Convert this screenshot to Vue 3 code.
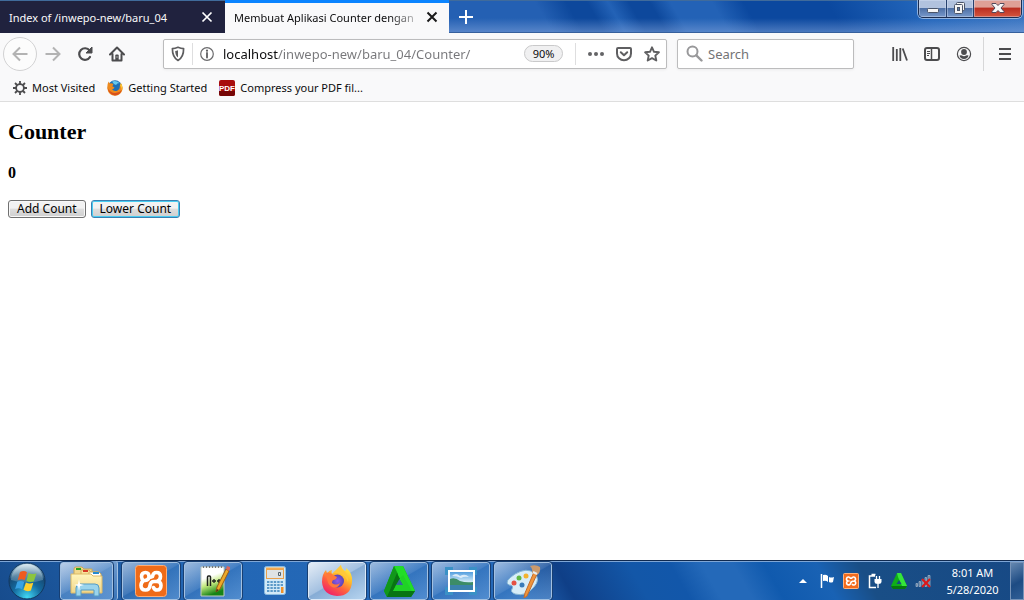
<script setup>
import { ref } from 'vue'

const count = ref(0)
const address = ref('localhost/inwepo-new/baru_04/Counter/')
const query = ref('')
</script>

<template>
  <div class="screen">
    <header class="titlebar">
      <div class="tabs" role="tablist">
        <div class="tab">
          <button class="tab-label" role="tab">Index of /inwepo-new/baru_04</button>
          <button class="tab-close" aria-label="Close tab">
            <svg width="12" height="12" viewBox="0 0 12 12"><path d="M1.500 1.500l9 9M10.500 1.500l-9 9" stroke="#fff" stroke-width="1.700" /></svg>
          </button>
        </div>
        <div class="tab active">
          <button class="tab-label" role="tab" aria-selected="true">Membuat Aplikasi Counter dengan</button>
          <button class="tab-close" aria-label="Close tab">
            <svg width="12" height="12" viewBox="0 0 12 12"><path d="M1.500 1.500l9 9M10.500 1.500l-9 9" stroke="#1a1a1a" stroke-width="2" /></svg>
          </button>
        </div>
        <button class="new-tab" aria-label="New tab">
          <svg width="14" height="14" viewBox="0 0 14 14"><path d="M7 0v14M0 7h14" stroke="#fff" stroke-width="2" /></svg>
        </button>
      </div>
      <div class="window-controls">
        <button class="wc" aria-label="Minimize">
          <svg width="26" height="18" viewBox="0 0 26 18"><rect x="7.500" y="8.500" width="11" height="4" rx="1" fill="#f5f5f5" stroke="#4a5468" /></svg>
        </button>
        <button class="wc" aria-label="Restore">
          <svg width="26" height="18" viewBox="0 0 26 18">
            <g fill="#f5f5f5" stroke="#4a5468"><rect x="9.500" y="2.500" width="8" height="8" rx="1" /><rect x="7.500" y="4.500" width="8" height="9" rx="1" /><rect x="10.500" y="7.500" width="2" height="3" fill="#5a79a8" /></g>
          </svg>
        </button>
        <button class="wc close" aria-label="Close window">
          <svg width="48" height="18" viewBox="0 0 48 18">
            <path d="M18 3.500h4l2 2 2-2h4v1L27 8l3 3.500v1h-4l-2-2-2 2h-4v-1L21 8l-3-3.500z" fill="#f8f8f8" stroke="#53495b" />
          </svg>
        </button>
      </div>
    </header>

    <nav class="toolbar" aria-label="Navigation">
      <button class="tool back" aria-label="Back">
        <svg width="16" height="16" viewBox="0 0 16 16"><path d="M15.500 8H1.500M8 1.500L1.500 8 8 14.500" fill="none" stroke="#b3b3b3" stroke-width="2" /></svg>
      </button>
      <button class="tool" aria-label="Forward">
        <svg width="16" height="16" viewBox="0 0 16 16"><path d="M0.500 8h14M8 1.500L14.500 8 8 14.500" fill="none" stroke="#b3b3b3" stroke-width="2" /></svg>
      </button>
      <button class="tool" aria-label="Reload">
        <svg width="16" height="16" viewBox="0 0 16 16"><path d="M12.600 4.500A5.800 5.800 0 1 0 13 11" fill="none" stroke="#4c4c4e" stroke-width="2.200" stroke-linecap="round" /><path d="M15 1v6H9z" fill="#4c4c4e" stroke="#4c4c4e" stroke-linejoin="round" /></svg>
      </button>
      <button class="tool" aria-label="Home">
        <svg width="16" height="16" viewBox="0 0 16 16"><path d="M1 8.500L8 1.500l7 7M3.500 8v6.500h9V8" fill="none" stroke="#4c4c4e" stroke-width="2" stroke-linecap="round" stroke-linejoin="round" /><path d="M6.300 14V9.500q0-1 1-1h1.400q1 0 1 1V14z" fill="#4c4c4e" /><path d="M8 10.500v1" stroke="#f9f9fa" /></svg>
      </button>

      <div class="field address">
        <button class="field-btn shield" aria-label="Tracking protection">
          <svg width="14" height="16" viewBox="0 0 14 16"><path d="M7 1.300Q10 2.600 12.600 2.600C12.700 8.500 11.700 11.900 7 14.500 2.300 11.900 1.300 8.500 1.400 2.600Q4 2.600 7 1.300z" fill="none" stroke="#5d5d5f" stroke-width="1.700" stroke-linejoin="round" /><path d="M7 4.200v7.300C4.900 10 4.300 8 4.200 5Q5.700 4.900 7 4.200z" fill="#5d5d5f" /></svg>
        </button>
        <button class="field-btn info" aria-label="Site information">
          <svg width="14" height="14" viewBox="0 0 14 14"><circle cx="7" cy="7" r="6.300" fill="none" stroke="#6b6b6d" stroke-width="1.200" /><path d="M7 6v4.500" stroke="#5d5d5f" stroke-width="1.800" stroke-linecap="round" /><circle cx="7" cy="3.700" r="1.100" fill="#5d5d5f" /></svg>
        </button>
        <input v-model="address" class="url" type="text" aria-label="Address" spellcheck="false" />
        <button class="zoom">90%</button>
        <span class="field-line"></span>
        <button class="field-btn" aria-label="Page actions">
          <svg width="16" height="16" viewBox="0 0 16 16" fill="#646466"><circle cx="2" cy="8" r="2" /><circle cx="8" cy="8" r="2" /><circle cx="14" cy="8" r="2" /></svg>
        </button>
        <button class="field-btn" aria-label="Save to Pocket">
          <svg width="16" height="16" viewBox="0 0 16 16" fill="none" stroke="#5f5f61" stroke-width="2" stroke-linecap="round" stroke-linejoin="round"><path d="M2 2h12q1 0 1 1v4.500a7 6.800 0 0 1-14 0V3q0-1 1-1z" /><path d="M4.800 6.200L8 9.200l3.200-3" /></svg>
        </button>
        <button class="field-btn" aria-label="Bookmark this page">
          <svg width="16" height="16" viewBox="0 0 16 16"><path d="M8 1.300l2 4.500 4.900.5-3.600 3.300 1 4.900L8 12.100l-4.300 2.400 1-4.900L1.100 6.300 6 5.800z" fill="none" stroke="#5f5f61" stroke-width="1.900" stroke-linejoin="round" /></svg>
        </button>
      </div>

      <div class="field search">
        <svg width="17" height="17" viewBox="0 0 17 17" fill="none" stroke="#98989a"><circle cx="6.500" cy="6.500" r="5" stroke-width="2" /><path d="M10.300 10.300l5.200 5.200" stroke-width="2.400" stroke-linecap="round" /></svg>
        <input v-model="query" type="search" placeholder="Search" aria-label="Search" />
      </div>

      <button class="tool" aria-label="Library">
        <svg width="16" height="16" viewBox="0 0 16 16" fill="none" stroke="#4c4c4e" stroke-width="1.800"><path d="M1.200 1v14M4.800 3v12M8.300 2v13M10.700 2.500L15 14.500" /></svg>
      </button>
      <button class="tool" aria-label="Sidebar">
        <svg width="16" height="16" viewBox="0 0 16 16" fill="none" stroke="#4c4c4e"><rect x="1" y="2" width="14" height="12" rx="2" stroke-width="2" /><path d="M7.500 2v12" stroke-width="1.500" /><path d="M3 5.500h3M3 7.500h3M3 9.500h2" /></svg>
      </button>
      <button class="tool" aria-label="Account">
        <svg width="16" height="16" viewBox="0 0 16 16"><circle cx="8" cy="8" r="6.600" fill="none" stroke="#4c4c4e" stroke-width="1.200" /><circle cx="8" cy="6" r="2.900" fill="#4c4c4e" /><path d="M3.500 9.500q1.800-.7 2.500 0 2 1.400 4 0 .8-.7 2.500 0-.7 3.300-4.500 3.600-3.800-.3-4.500-3.600z" fill="#4c4c4e" /></svg>
      </button>
      <span class="toolbar-line"></span>
      <button class="tool" aria-label="Open menu">
        <svg width="12" height="12" viewBox="0 0 12 12"><path d="M0 1h12M0 6h12M0 11h12" stroke="#4c4c4e" stroke-width="2" /></svg>
      </button>
    </nav>

    <nav class="bookmarks" aria-label="Bookmarks">
      <a href="#">
        <svg width="14" height="14" viewBox="0 0 14 14" fill="none" stroke="#4c4c4e"><circle cx="7" cy="7" r="3.900" stroke-width="1.800" /><path d="M7 0v3M7 11v3M0 7h3M11 7h3M2 2l2 2M10 10l2 2M12 2l-2 2M4 10l-2 2" stroke-width="1.800" /></svg>
        Most Visited
      </a>
      <a href="#">
        <svg width="16" height="16" viewBox="0 0 16 16"><circle cx="8" cy="7.500" r="7.200" fill="#1f6fb4" /><path d="M5 1.500q4-1.500 7.500 1.500Q10 3 9 5 7 5 5 1.500z" fill="#68c8ed" /><path d="M1.500 1.500q.3 1.600 1.500 2 2-.6 3.500.8L5.300 6.200 7.500 7.500q-1 2-2.500 1.500 2 3 5.500 1.500 2.800-1.500 2.200-4.500Q13.500 5 13.800 3 16.200 6 15.500 9.500 14 15.500 8 15.700 1.500 15.300.4 9 0 4.500 1.500 1.500z" fill="#ee8a1d" /><path d="M.6 8q2.700 5 7.500 5 4.500-.2 6.700-3Q13 15.400 8 15.400 2 14.800.6 8z" fill="#d8501c" /><path d="M13.800 3Q16.200 6.500 14.800 10.500q0-3-1.600-5z" fill="#ffce32" /></svg>
        Getting Started
      </a>
      <a href="#">
        <svg class="pdf" width="16" height="16" viewBox="0 0 16 16"><rect width="16" height="16" rx="2" fill="#a80d0d" /><path d="M0 11h16v3a2 2 0 0 1-2 2H2a2 2 0 0 1-2-2z" fill="#760606" /><text x="8" y="11" text-anchor="middle">PDF</text></svg>
        Compress your PDF fil...
      </a>
    </nav>

    <main class="page">
      <h2>Counter</h2>
      <h4>{{ count }}</h4>
      <div class="actions">
        <button class="count-btn" @click="count++">Add Count</button>
        <button class="count-btn focused" @click="count--">Lower Count</button>
      </div>
    </main>

    <footer class="taskbar">
      <button class="start" aria-label="Start">
        <svg width="38" height="38" viewBox="0 0 38 38">
          <defs>
            <radialGradient id="orb" cx=".5" cy=".95" r=".9"><stop offset="0" stop-color="#41d8f4" /><stop offset=".45" stop-color="#146a9f" /><stop offset=".75" stop-color="#164a75" /><stop offset="1" stop-color="#8fb4c9" /></radialGradient>
            <linearGradient id="shine" x2="0" y2="1"><stop stop-color="#e3eff5" stop-opacity=".9" /><stop offset="1" stop-color="#7ba6bd" stop-opacity=".35" /></linearGradient>
          </defs>
          <circle cx="19" cy="19" r="18" fill="url(#orb)" stroke="#12375e" />
          <path d="M3 18A16 16 0 0 1 35 18Q19 23 3 18z" fill="url(#shine)" />
          <path d="M12 10q4-2 7 .2l-2.300 8q-3.200-2-7 0z" fill="#ef5b20" />
          <path d="M20.500 11q3.500 2 8 .2l-2.600 8q-4 1.600-7.500-.3z" fill="#8bc53f" />
          <path d="M9.300 19.700q3.700-1.700 6.900.3l-2.100 7.300q-3.500-2-7-.2z" fill="#38a2e4" />
          <path d="M17.900 20.400q3.500 2 7.400.3l-2.400 7.900q-4 1.400-7.400-.8z" fill="#ffd02c" />
        </svg>
      </button>

      <div class="tasks">
        <div class="stack">
          <button class="task" aria-label="File Explorer">
            <svg width="36" height="34" viewBox="0 0 36 34">
              <defs><linearGradient id="folder" x2="0" y2="1"><stop stop-color="#fff5bd" /><stop offset="1" stop-color="#f0d588" /></linearGradient></defs>
              <path d="M5 5q0-2 2-2h6l2 2h8v21H5z" fill="#f2d98e" stroke="#c9a757" /><path d="M7 4h5v2H7z" fill="#28a51b" />
              <path d="M12 6h8l2 2h7v19H12z" fill="#f9e29b" stroke="#cfae5c" /><path d="M14 6h5v2h-5z" fill="#d63a25" />
              <path d="M20 8h10l2 2v17H20z" fill="#fff" stroke="#cfae5c" /><path d="M24 8h6v2h-6z" fill="#238ad0" />
              <path d="M2 10h20l2 2h9v17H2z" fill="url(#folder)" stroke="#dcb966" />
              <path d="M7 32V24q0-4 4-4h15q4 0 4 4v8h-5v-6H12v6z" fill="#9ad4ec" stroke="#559bc3" />
              <path d="M10 15l1 5 4 1-4 1-1 5-1-5-4-1 4-1z" fill="#fff" />
            </svg>
          </button>
        </div>
        <button class="task" aria-label="XAMPP Control Panel">
          <svg width="34" height="34" viewBox="0 0 34 34">
            <rect x="1.500" y="1.500" width="31" height="31" rx="3" fill="#ef6b18" stroke="#ffad75" />
            <path d="M15 12.500Q15 8.500 11.500 8.500 7.500 8.500 7.500 12.500 7.500 15 9.500 16.500 7 18.500 7 21.500 7 26 11.500 26 15.500 26 16 21.500 16.500 17.500 20 17.500H23Q27 17.500 27 21.500 27 26 23 26 20.500 26 19.500 23.500M18.500 12.500Q19 8.500 22.500 8.500 26.500 8.500 26.500 12.500 26.500 16 23 17.500M11 16.500Q15 16 15 12.500 16 14 18.500 12.500" fill="none" stroke="#fff" stroke-width="3.600" stroke-linecap="round" stroke-linejoin="round" />
          </svg>
        </button>
        <button class="task" aria-label="Notepad++">
          <svg width="34" height="34" viewBox="0 0 34 34">
            <defs><linearGradient id="note" x1="0" x2=".3" y2="1"><stop offset=".4" stop-color="#fff" /><stop offset=".65" stop-color="#c4ea7e" /><stop offset="1" stop-color="#168315" /></linearGradient></defs>
            <path d="M5 3h23v29H5z" fill="url(#note)" stroke="#c4ccc0" /><path d="M7 3h20" stroke="#777" stroke-width="2" stroke-dasharray="1 2" />
            <path d="M11.500 22V13q0-1 1-1h1q1 0 1 1v9" fill="none" stroke="#20231e" stroke-width="1.500" /><path d="M16 17h4M18 15v4M21 17h4M23 15v4" stroke="#20231e" stroke-width="1.300" />
            <path d="M30 5l3 2-9 18-4 3 1-5z" fill="#ecaa29" stroke="#9b5915" /><path d="M30 5l1-3 3 1v2l-1 2z" fill="#d96760" /><path d="M20 28l1-3 1.500 1z" fill="#332a1b" />
          </svg>
        </button>
        <button class="task plain" aria-label="Calculator">
          <svg width="24" height="32" viewBox="0 0 24 32">
            <rect x="1.500" y="1.500" width="21" height="28" rx="2" fill="#d2e9f7" stroke="#8abbe0" /><rect x="3.500" y="4.500" width="17" height="9" fill="#dfe3e4" stroke="#e8a04c" /><path d="M3 3.500h18" stroke="#f3aa51" stroke-width="2" /><path d="M15.500 7.500h2v3h-2z" fill="none" stroke="#56636b" />
            <path d="M4 17h16M4 20h16M4 23h13M4 26h13" stroke="#5c9ac8" stroke-width="2" stroke-dasharray="2.400 1" /><path d="M18 22h2.500v6H18z" fill="#f09128" />
          </svg>
        </button>
        <button class="task current" aria-label="Firefox">
          <svg width="34" height="34" viewBox="0 0 34 34">
            <defs>
              <linearGradient id="flame" x1=".8" x2=".2" y2="1"><stop stop-color="#fff34f" /><stop offset=".35" stop-color="#ffb829" /><stop offset=".62" stop-color="#ff633d" /><stop offset="1" stop-color="#ed1770" /></linearGradient>
              <radialGradient id="globe"><stop stop-color="#9059ec" /><stop offset="1" stop-color="#5945b4" /></radialGradient>
            </defs>
            <path d="M21 1q0 3 4 6 2-1 1-3 7 5 6 14-1 14-15 14Q3 31 2 18 2 10 6 6l1 3q3-3 5-3-1 2 0 4 5-4 9-9z" fill="url(#flame)" />
            <circle cx="17.500" cy="17" r="6.500" fill="url(#globe)" /><path d="M6 9q4-1 7 2l4 2q-1 3-4 3-1 1-1 3 4 3 8 0-2 6-8 4Q7 21 6 9z" fill="#ff783b" /><path d="M12 10q4-4 9-9 0 4 5 8 3 4 2 9-2-6-7-8-4-2-9 0z" fill="#ffc83a" />
          </svg>
        </button>
        <button class="task" aria-label="Green triangle application">
          <svg width="34" height="34" viewBox="0 0 34 34"><path d="M12 2h9l12 25-4 6H5L2 27z" fill="#0baf14" /><path d="M12 2h9l12 25H24L14 8z" fill="#22dd28" /><path d="M12 2l4 8-9 17 2 6H5l-3-6z" fill="#11971a" /><path d="M15 9l3 6-7 12h22l-4 6H5z" fill="#087412" /><path d="M11 27l3-6h8l-4-7 3-3 9 16z" fill="#20d226" /><path d="M17.500 15l3.500 6h-7z" fill="#3767a0" /></svg>
        </button>
        <button class="task" aria-label="Photo viewer">
          <svg width="32" height="28" viewBox="0 0 32 28">
            <defs><linearGradient id="sky" x2="0" y2="1"><stop stop-color="#4696dc" /><stop offset=".6" stop-color="#e1f4fb" /></linearGradient></defs>
            <path d="M2 8V2h6M24 2h6v6M30 20v6h-6M8 26H2v-6" fill="none" stroke="#3a91c6" stroke-width="4" /><rect x="4" y="4" width="25" height="20" fill="url(#sky)" stroke="#fff" stroke-width="2" /><path d="M5 12q5-2 10 2 6 2 13 1v4H5z" fill="#3c8c67" /><path d="M5 18h23v5H5z" fill="#3b81ad" /><path d="M7 9q4-4 8 0 5-3 9 1-5-1-8 1-4-2-9-2z" fill="#fff" opacity=".7" />
          </svg>
        </button>
        <button class="task" aria-label="Paint">
          <svg width="36" height="34" viewBox="0 0 36 34">
            <path d="M10 10Q22 3 29 9q7 6 0 14-8 10-19 7-5-2-3-5 2-4-3-4-6-3 6-11z" fill="#d7edf8" stroke="#84b4d3" /><circle cx="17" cy="21" r="2.500" fill="#397bb8" /><circle cx="9" cy="19" r="2.500" fill="#e45142" /><circle cx="14" cy="14" r="2.500" fill="#61b745" /><circle cx="21" cy="12" r="2.500" fill="#f3b32d" /><path d="M29 8l3 2-10 22-3 2 1-5z" fill="#ef943b" stroke="#c36d2d" /><path d="M25 2q6-2 10 1 1 5-3 8l-5-2q1-4-2-7z" fill="#cb9a6c" /><path d="M28 8l4 2" stroke="#e8edf0" stroke-width="2" />
          </svg>
        </button>
      </div>

      <div class="tray">
        <button aria-label="Show hidden icons"><svg width="8" height="4" viewBox="0 0 8 4"><path d="M0 4l4-4 4 4z" fill="#fff" /></svg></button>
        <button aria-label="Action Center"><svg width="16" height="16" viewBox="0 0 16 16"><path d="M2.500 1v14" stroke="#fff" stroke-width="1.500" /><path d="M4 2q3-1 5 1v6q-2-2-5-1zM10 4q2 1 5 0l-1 5q-2 1-4 0z" fill="#fff" /></svg></button>
        <button aria-label="XAMPP"><svg width="16" height="16" viewBox="0 0 16 16"><rect x=".5" y=".5" width="15" height="15" rx="1" fill="#f26b1d" stroke="#ffb27d" /><path d="M7.500 6A2 2 0 1 0 5 8a2 2 0 1 0 2.500 2.500Q8 8 11 8A2 2 0 1 0 8.500 6M11 8a2 2 0 1 1-2 3" fill="none" stroke="#fff" stroke-width="1.600" /></svg></button>
        <button aria-label="Power"><svg width="16" height="16" viewBox="0 0 16 16" fill="none" stroke="#fff"><path d="M8 3H2.500v11.500H9M4.500 1.500h4" stroke-width="1.500" /><path d="M9.500 3v4M12.500 3v4M11 11v4" stroke-width="1.300" /><path d="M7.500 6h7v2.500q0 2.500-3.500 2.500-3.500 0-3.500-2.500z" fill="#fff" stroke="none" /></svg></button>
        <button aria-label="Green triangle application"><svg width="16" height="16" viewBox="0 0 16 16"><path d="M6 0h4l6 13-2 3H2l-2-3z" fill="#0fae19" /><path d="M6 0h4l6 13h-5L7 4z" fill="#35e53b" /><path d="M0 13h16l-2 3H2z" fill="#06780f" /><path d="M8 7l2.500 4h-5z" fill="#164b84" /></svg></button>
        <button aria-label="Network unavailable"><svg width="16" height="14" viewBox="0 0 16 14"><path d="M1 9.500h1.500v3H1zM4 7.500h1.500v5H4zM7 5.500h1.500v7H7zM10 3.500h1.500v9H10zM13 1.500h2v11h-2z" fill="#5f7899" stroke="#a9bbcf" stroke-width=".7" /><path d="M7 5l8 8M15 5l-8 8" stroke="#de1717" stroke-width="2" /></svg></button>
      </div>
      <button class="clock"><time>8:01 AM</time><time>5/28/2020</time></button>
      <button class="show-desktop" aria-label="Show desktop"></button>
    </footer>
  </div>
</template>

<style>
body {
  margin: 0;
}
</style>

<style scoped>
.screen {
  display: flex;
  flex-direction: column;
  min-height: 100vh;
  background: #fff;
  color: #0c0c0d;
  font-family: "Noto Sans", "Open Sans", sans-serif;
  font-size: 11px;
}
.screen * {
  box-sizing: border-box;
}
button,
input {
  margin: 0;
  padding: 0;
  border: 0;
  background: none;
  color: inherit;
  font: inherit;
}
button {
  display: flex;
  align-items: center;
  justify-content: center;
}
svg {
  display: block;
  flex: none;
}

.titlebar {
  display: flex;
  justify-content: space-between;
  height: 33px;
  border-top: 1px solid #406b9b;
  border-bottom: 1px solid #36609d;
  background:
    linear-gradient(180deg, transparent 55%, rgba(137, 169, 222, 0.5)),
    linear-gradient(60deg, #2460b3 0 53%, #0d489c 56% 58%, #2362b6 60%, #0d489c 62% 64%, #2362b6 66% 70%, #0b489f 73% 81%, #2366bb 90%, #3b76c2);
}
.tabs {
  display: flex;
  margin-bottom: -1px;
}
.tab {
  display: flex;
  width: 225px;
  padding: 0 10px 0 9px;
  background: #20223e;
  color: #f9f9fa;
}
.tab.active {
  width: 224px;
  margin-top: -1px;
  padding-right: 9px;
  padding-top: 1px;
  background: #f9f9fa;
  box-shadow: inset 0 3px #0a84ff;
  color: #0c0c0d;
}
.tab-label {
  flex: 1;
  min-width: 0;
  justify-content: flex-start;
  white-space: nowrap;
}
.tab.active .tab-label {
  mask-image: linear-gradient(90deg, #000 82%, transparent);
}
.tab-close {
  width: 16px;
}
.new-tab {
  width: 34px;
}
.window-controls {
  display: flex;
  height: 18px;
  margin: -1px 2px 0 0;
  border: 1px solid #1c2d50;
  border-top: 0;
  border-radius: 0 0 5px 5px;
  box-shadow: 0 0 0 1px rgba(190, 211, 240, 0.7);
  overflow: hidden;
}
.wc {
  width: 27px;
  background: linear-gradient(#b1c2de 0 45%, #4e70a6 50%, #7899cb);
  box-shadow: inset 0 0 0 1px rgba(219, 231, 248, 0.4);
}
.wc + .wc {
  border-left: 1px solid #26416e;
}
.wc.close {
  width: 48px;
  background: linear-gradient(#dfa096 0 40%, #bb3022 50%, #d4553e);
}

.toolbar {
  display: flex;
  align-items: center;
  height: 41px;
  padding: 0 3px;
  background: #f9f9fa;
}
.tool {
  width: 32px;
  height: 32px;
}
.tool.back {
  width: 34px;
  height: 34px;
  border: 1px solid #d2d2d3;
  border-radius: 50%;
  background: #fcfcfc;
}
.field {
  display: flex;
  align-items: center;
  height: 30px;
  border: 1px solid #bcbcbd;
  border-radius: 2px;
  background: #fff;
  box-shadow: 0 1px 3px rgba(0, 0, 0, 0.06);
  font-size: 13px;
}
.field input {
  flex: 1;
  min-width: 0;
  height: 26px;
  outline: 0;
}
.address {
  flex: 1;
  min-width: 0;
  margin: 0 10px 0 30px;
}
.field-btn {
  width: 28px;
  height: 28px;
}
.field-btn.shield {
  width: 29px;
  border-right: 1px solid #dededf;
  height: 22px;
}
.field-btn.info {
  margin-right: 2px;
}
.field .url {
  background: linear-gradient(90deg, #0c0c0d 55px, #77777a 55px);
  background-clip: text;
  -webkit-text-fill-color: transparent;
}
.zoom {
  width: 39px;
  height: 17px;
  border: 1px solid #c9c9ca;
  border-radius: 9px;
  background: #f0f0f1;
  font-size: 11px;
}
.field-line {
  width: 1px;
  height: 22px;
  margin: 0 6px 0 12px;
  background: #dededf;
}
.search {
  width: 177px;
  gap: 5px;
  margin-right: 30px;
  padding: 0 8px;
}
.search input::placeholder {
  color: #737375;
  opacity: 1;
}
.toolbar-line {
  width: 1px;
  height: 34px;
  margin: 0 5px 0 3px;
  background: #d7d7d8;
}

.bookmarks {
  display: flex;
  align-items: center;
  gap: 12px;
  height: 28px;
  padding: 0 13px;
  border-bottom: 1px solid #dedede;
  background: #f9f9fa;
}
.bookmarks a {
  display: flex;
  align-items: center;
  gap: 5px;
  color: inherit;
  text-decoration: none;
  white-space: nowrap;
}
.pdf text {
  fill: #fff;
  font-family: "Liberation Sans", sans-serif;
  font-size: 8px;
  font-weight: 700;
}

.page {
  flex: 1;
  padding: 17px 8px;
  color: #000;
  font-family: "Liberation Serif", serif;
}
h2 {
  margin: 0 0 20px;
  font-size: 22px;
  line-height: 25px;
}
h4 {
  margin: 0 0 18px;
  font-size: 16px;
  line-height: 18px;
}
.actions {
  display: flex;
  gap: 5px;
}
.count-btn {
  height: 18px;
  padding: 0 8px;
  border: 1px solid #707070;
  border-radius: 3px;
  background: linear-gradient(#f2f2f2 0 45%, #dddddd 50%, #cfcfcf);
  box-shadow: inset 0 0 0 1px #f8f8f8;
  font-family: "Noto Sans", sans-serif;
  font-size: 12px;
  line-height: 16px;
}
.count-btn.focused {
  border-color: #3c7fb1;
  box-shadow: inset 0 0 0 1px #48cdf2;
}

.taskbar {
  display: flex;
  height: 40px;
  border-top: 1px solid #102a50;
  box-shadow: inset 0 1px #7ea6d6;
  background: linear-gradient(60deg, #174c8d 0, #2367b5 20%, #2468b8 50%, #0f3f87 55%, #1357a8 62%, #1257aa 66%, #2469b9 69% 72%, #105aae 75%, #1962b4 80%, #194e86 84%, #174985);
}
.start {
  width: 38px;
  margin: 0 14px 0 8px;
}
.tasks {
  display: flex;
  gap: 4px;
}
.task {
  width: 58px;
  height: 38px;
  margin-top: 1px;
  border: 1px solid #a2c0e1;
  border-radius: 3px;
  outline: 1px solid #173f73;
  background: linear-gradient(150deg, rgba(236, 241, 249, 0.6), rgba(135, 177, 224, 0.35) 48%, rgba(90, 146, 207, 0.3) 50%, rgba(127, 178, 232, 0.5));
}
.stack {
  width: 58px;
  padding-right: 4px;
  border-right: 1px solid #a2c0e1;
  border-radius: 3px;
  background: linear-gradient(#6f9bce, #3974b8);
}
.stack .task {
  width: 53px;
}
.task.plain {
  border-color: transparent;
  outline: 0;
  background: none;
}
.task.current {
  border-color: #dce9f7;
  background: linear-gradient(150deg, #e5edf6, #a4c1e1 48%, #86acd5 50%, #b6d4ef);
}
.tray {
  display: flex;
  align-items: center;
  margin-left: auto;
}
.tray button {
  width: 24px;
  height: 38px;
}
.clock {
  flex-direction: column;
  width: 75px;
  color: #fff;
  font-size: 11px;
  line-height: 17px;
}
.show-desktop {
  width: 14px;
  margin-top: 1px;
  border: 1px solid #7693b8;
  background: linear-gradient(150deg, #6587b0, #1d4b83 55%, #315f96);
}
</style>
